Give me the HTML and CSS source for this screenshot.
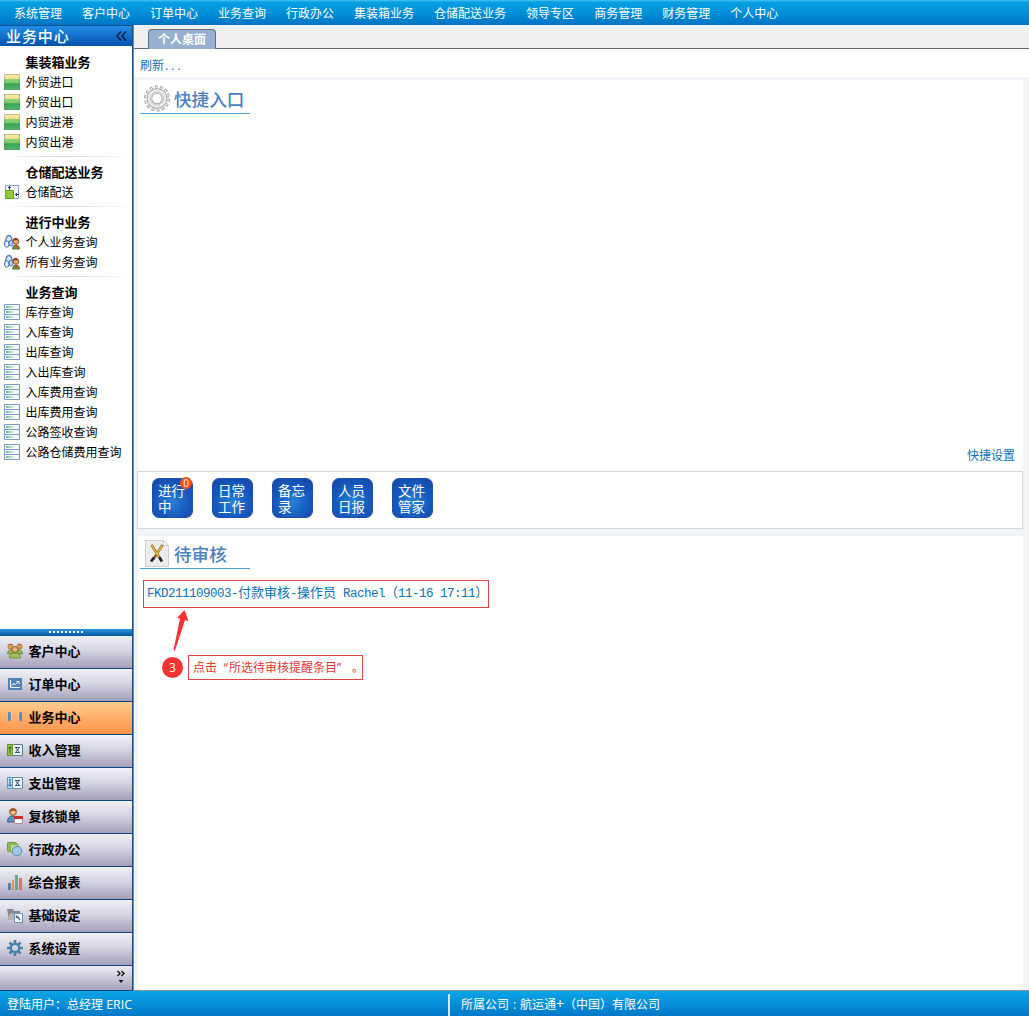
FILE: index.html
```html
<!DOCTYPE html>
<html lang="zh-CN">
<head>
<meta charset="utf-8">
<title>业务中心</title>
<link rel="stylesheet" href="styles.css">
</head>
<body>
<svg class="defs" aria-hidden="true">
  <defs>
    <linearGradient id="gold" x2="0" y2="1"><stop offset="0" stop-color="#fff6b0"/><stop offset="1" stop-color="#e8d680"/></linearGradient>
    <linearGradient id="green" x2="0" y2="1"><stop offset="0" stop-color="#8ad47a"/><stop offset=".38" stop-color="#7fca68"/><stop offset=".42" stop-color="#35a257"/><stop offset="1" stop-color="#4fba70"/></linearGradient>
    <linearGradient id="fade"><stop offset="0" stop-color="#6fbf98"/><stop offset="1" stop-color="#eef8f4"/></linearGradient>
    <symbol id="box" viewBox="0 0 16 16"><path fill="url(#gold)" d="M0 0h16v6H0z"/><path fill="url(#green)" d="M0 5h16v11H0z"/><path fill="none" stroke="#5b9367" stroke-opacity=".6" d="M.5 6v9.500h15V6"/><path fill="none" stroke="#c5b87c" d="M.5 6V.5h15V6"/></symbol>
    <symbol id="rows" viewBox="0 0 16 16"><path fill="#f5faff" stroke="#7f98c4" d="M.5 .5h15v15H.5zM.5 5.500h15M.5 10.500h15"/><path fill="url(#fade)" d="M2 2h9v2H2zM2 7h9v2H2zM2 12h9v2H2z"/></symbol>
    <symbol id="store" viewBox="0 0 16 16"><path fill="#f6f9ff" stroke="#8d9cc4" d="M1.500 1.500h13v13h-13z"/><path fill="#91c93d" stroke="#65a52b" d="M1.500 6.500h8v8h-8z"/><path fill="none" stroke="#26385f" d="M5.500 2v4M4 3.500h3M11 10.500h4M12.500 9v3"/></symbol>
    <symbol id="find" viewBox="0 0 16 16"><path fill="#dceaff" stroke="#587cc0" stroke-width="1.300" d="M1 10Q2 1.500 5 1.500q3 0 3.500 8"/><ellipse cx="2.800" cy="10" rx="2.300" ry="3.200" fill="#eaf4ff" stroke="#456db4"/><ellipse cx="7" cy="9" rx="2" ry="3" fill="#bcd3f5" stroke="#456db4"/><circle cx="12" cy="7.500" r="2.800" fill="#e8af73" stroke="#8d4623"/><path fill="#8a4528" d="M9 7q0-4 4-3l2 3-3-1z"/><path fill="#6b9f43" stroke="#4c732c" d="M8.500 15q0-4 3.500-4t3.500 4z"/><path fill="#cf4f35" d="M11 11h2v3h-2z"/></symbol>
    <symbol id="people" viewBox="0 0 16 16"><g stroke="#97672f" stroke-width=".7"><circle cx="3.500" cy="3.500" r="2.600" fill="#d9a05d"/><circle cx="12.500" cy="3.500" r="2.600" fill="#d9a05d"/></g><path fill="#94b65a" stroke="#58792e" stroke-width=".7" d="M.5 11q0-4 3-4h9q3 0 3 4z"/><circle cx="8" cy="6.500" r="3" fill="#e6b775" stroke="#99582b"/><path fill="#a0c24f" stroke="#587c2b" stroke-width=".7" d="M2.500 15q0-5 5.500-5t5.500 5z"/><path fill="#bc5a3f" d="M2 1h3v1H2zM11 1h3v1h-3z"/></symbol>
    <symbol id="order" viewBox="0 0 16 16"><path fill="#4e86b8" d="M1 2h14v12H1z"/><path fill="none" stroke="#fff" d="M3.500 4v7.500H13M4.500 9.500l2.500-2 1.500 1 3-3M9.500 5.500H12V8"/></symbol>
    <symbol id="bars" viewBox="0 0 16 16"><path fill="#588eb8" d="M1 3h2l1 2v6l-1 1H1zM13 3h2v9h-2l-1-1V5z"/><path fill="#f5c89a" d="M4 4h1v7H4zM11 4h1v7h-1z"/></symbol>
    <symbol id="income" viewBox="0 0 16 16"><path fill="#f5faff" stroke="#537f9f" d="M.5 2.500h15v11H.5z"/><path fill="#9bc848" stroke="#5f952b" d="M.5 2.500h5v11h-5z"/><path fill="none" stroke="#315d2d" d="M3 12V5M1.500 6.500L3 4.500l1.500 2"/><path fill="none" stroke="#31527c" d="M8 5.500h5M8.500 5.500l4 5M12.500 5.500l-4 5M8 10.500h5"/></symbol>
    <symbol id="expense" viewBox="0 0 16 16"><path fill="#f5faff" stroke="#668eb5" d="M.5 2.500h15v11H.5z"/><path fill="#b9dcf1" stroke="#5d9ac2" d="M.5 2.500h5v11h-5z"/><path fill="none" stroke="#285d90" d="M3 4v7M1.500 9.500l1.500 2 1.500-2"/><path fill="none" stroke="#31527c" d="M8 5.500h5M8.500 5.500l4 5M12.500 5.500l-4 5M8 10.500h5"/></symbol>
    <symbol id="lock" viewBox="0 0 16 16"><circle cx="6" cy="4" r="3.400" fill="#f0bc7a" stroke="#985326"/><path fill="#9d5829" d="M2.500 4Q3 0 6 .5q4 0 3.500 3Q6 2 2.500 4z"/><path fill="#5990c6" stroke="#315f91" d="M.5 14q0-6 5-6t5 6z"/><path fill="#fff" stroke="#a68d8e" d="M7.500 9.500h8v6h-8z"/><path fill="#c82d2a" d="M7 8h9v3H7z"/></symbol>
    <symbol id="office" viewBox="0 0 16 16"><rect x=".5" y="1.500" width="9" height="9" rx="1" fill="#90bd58" stroke="#699b38"/><rect x="3.500" y="3.500" width="8" height="8" rx="1" fill="#c9dfa1" stroke="#76a748"/><circle cx="10" cy="10" r="4.700" fill="#9fc9e9" stroke="#5589b3"/></symbol>
    <symbol id="chart" viewBox="0 0 16 16"><path fill="#637fa9" d="M1 9h3v7H1z"/><path fill="#dc9a55" d="M5 6h2v10H5z"/><path fill="#6aa78f" d="M8 1h3v15H8z"/><path fill="#dc755d" d="M12 4h3v12h-3z"/></symbol>
    <symbol id="folder" viewBox="0 0 16 16"><path fill="#888" d="M0 2h6l1 2h6v3H3l-1 6z"/><path fill="#b3b3b6" d="M3 6h11l-3 7H1z"/><path fill="#fafdff" stroke="#6c91ba" d="M7.500 6.500h8v9h-8z"/><path fill="none" stroke="#4c6e98" stroke-width="1.500" d="M10 9l3 4M9.500 8.500v2h2"/></symbol>
    <symbol id="gear" viewBox="0 0 16 16"><g fill="none" stroke="#477fae"><circle cx="8" cy="8" r="4.200" stroke-width="2.400"/><path stroke-width="2.600" d="M8 0v3M8 13v3M0 8h3M13 8h3M2.500 2.500l2 2M11.500 11.500l2 2M13.500 2.500l-2 2M2.500 13.500l2-2"/></g></symbol>
  </defs>
</svg>
<div class="app">
  <nav class="topnav"><span>系统管理</span><span>客户中心</span><span>订单中心</span><span>业务查询</span><span>行政办公</span><span>集装箱业务</span><span>仓储配送业务</span><span>领导专区</span><span>商务管理</span><span>财务管理</span><span>个人中心</span></nav>
  <div class="body">
    <aside class="sidebar">
      <header class="side-head"><span>业务中心</span><svg width="11" height="10" viewBox="0 0 11 10"><path fill="none" stroke="#061a38" stroke-width="1.400" d="M5 .5L1 5l4 4.500M10 .5L6 5l4 4.500"/></svg></header>
      <div class="tree">
        <section class="group"><h3>集装箱业务</h3>
          <a><svg><use href="#box"/></svg><span>外贸进口</span></a><a><svg><use href="#box"/></svg><span>外贸出口</span></a><a><svg><use href="#box"/></svg><span>内贸进港</span></a><a><svg><use href="#box"/></svg><span>内贸出港</span></a></section>
        <section class="group"><h3>仓储配送业务</h3>
          <a><svg><use href="#store"/></svg><span>仓储配送</span></a></section>
        <section class="group"><h3>进行中业务</h3>
          <a><svg><use href="#find"/></svg><span>个人业务查询</span></a><a><svg><use href="#find"/></svg><span>所有业务查询</span></a></section>
        <section class="group"><h3>业务查询</h3>
          <a><svg><use href="#rows"/></svg><span>库存查询</span></a><a><svg><use href="#rows"/></svg><span>入库查询</span></a><a><svg><use href="#rows"/></svg><span>出库查询</span></a><a><svg><use href="#rows"/></svg><span>入出库查询</span></a><a><svg><use href="#rows"/></svg><span>入库费用查询</span></a><a><svg><use href="#rows"/></svg><span>出库费用查询</span></a><a><svg><use href="#rows"/></svg><span>公路签收查询</span></a><a><svg><use href="#rows"/></svg><span>公路仓储费用查询</span></a></section>
      </div>
      <div class="splitter"><i></i></div>
      <div class="stack">
        <a><svg><use href="#people"/></svg>客户中心</a>
        <a><svg><use href="#order"/></svg>订单中心</a>
        <a class="active"><svg><use href="#bars"/></svg>业务中心</a>
        <a><svg><use href="#income"/></svg>收入管理</a>
        <a><svg><use href="#expense"/></svg>支出管理</a>
        <a><svg><use href="#lock"/></svg>复核锁单</a>
        <a><svg><use href="#office"/></svg>行政办公</a>
        <a><svg><use href="#chart"/></svg>综合报表</a>
        <a><svg><use href="#folder"/></svg>基础设定</a>
        <a><svg><use href="#gear"/></svg>系统设置</a>
      </div>
      <div class="side-foot"><svg width="8" height="14" viewBox="0 0 8 14"><path fill="none" stroke="#111" stroke-width="1.400" d="M.5 1L3 3.500.5 6M4.500 1L7 3.500 4.500 6"/><path fill="#111" d="M1.500 10h5L4 13z"/></svg></div>
    </aside>
    <main class="main">
      <div class="tabs"><div class="tab">个人桌面</div></div>
      <div class="refresh">刷新<i>...</i></div>
      <section class="panel quick">
        <h2 class="title">
          <svg width="28" height="28" viewBox="0 0 28 28"><circle cx="14" cy="13.500" r="11.300" fill="none" stroke="#9a9a9a" stroke-width="3.400" stroke-dasharray="2.800 2.271"/><circle cx="14" cy="13.500" r="10.900" fill="none" stroke="#f3f3f3" stroke-width="2.600" stroke-dasharray="1.400 3.492" stroke-dashoffset="-.65"/><circle cx="14" cy="13.500" r="7.500" fill="none" stroke="#999" stroke-width="5.400"/><circle cx="14" cy="13.500" r="7.500" fill="none" stroke="#ececec" stroke-width="4"/><circle cx="14" cy="13.500" r="6.600" fill="none" stroke="#c4c4c4"/></svg>
          <span>快捷入口</span></h2>
        <a class="settings">快捷设置</a>
      </section>
      <section class="tray">
        <a class="tile">进行<br>中<b class="badge">0</b></a>
        <a class="tile">日常<br>工作</a>
        <a class="tile">备忘<br>录</a>
        <a class="tile">人员<br>日报</a>
        <a class="tile">文件<br>管家</a>
      </section>
      <section class="panel review">
        <h2 class="title">
          <svg width="28" height="28" viewBox="0 0 28 28"><path fill="#ececea" stroke="#cfcfcd" d="M2.500 .5h18l5 5v21h-23z"/><path fill="#fff" stroke="#cfcfcd" d="M20.500 .5v5h5z"/><path fill="none" stroke="#7a5525" stroke-width="2.400" d="M8.500 5l9 14M19.500 5l-9 14"/><path fill="none" stroke="#efb63a" stroke-width="1.400" d="M8.800 5.500l7 11M19.200 5.500L13 15"/><path fill="none" stroke="#252525" stroke-width="2.800" d="M16.500 17.500l2.500 4M11 17.500l-3 4"/></svg>
          <span>待审核</span></h2>
        <a class="entry">FKD211109003-<span>付款审核</span>-<span>操作员</span> Rachel<span>（</span>11-16 17:11<span>）</span></a>
        <svg class="arrow" width="20" height="42" viewBox="0 0 20 42"><path fill="#f83232" d="M13.500 0l4 11-3.500-1L4 40.500l-1.500-.5L9 8.500 6 8z"/></svg>
        <div class="callout"><b class="num">3</b><span class="note">点击<i class="open">“</i>所选待审核提醒条目<i>”</i>。</span></div>
      </section>
    </main>
  </div>
  <footer class="status"><span class="user">登陆用户：总经理 <em>ERIC</em></span><span class="company">所属公司<i>:</i>航运通<em>+</em>（中国）有限公司</span></footer>
</div>
</body>
</html>
```
FILE: styles.css
```css
* { box-sizing: border-box; }
body { margin: 0; font: 12px/20px "Open Sans", "Noto Sans CJK SC", sans-serif; color: #000; }
i, em { font-style: normal; }
.defs { position: absolute; width: 0; height: 0; }
.app { height: 1016px; display: flex; flex-direction: column; overflow: hidden; }

.topnav { height: 25px; display: flex; gap: 20px; padding: 4px 14px 0; color: #fff; background: linear-gradient(#49c4f0 0, #08a0e4 2px, #0090d8 50%, #0074c4 100%); }
.topnav span { white-space: nowrap; }

.body { height: 966px; display: flex; }
.sidebar { width: 133px; display: flex; flex-direction: column; border-right: 1px solid #194a84; box-shadow: 1px 0 #6c93b8; position: relative; }
.side-head { height: 21px; display: flex; justify-content: space-between; align-items: center; padding: 0 5px 0 6px; border-top: 1px solid #164d91; background: linear-gradient(#218ee8, #0452ad); color: #fff; font-size: 15px; font-weight: 500; letter-spacing: .9px; }
.tree { flex: 1; padding-top: 6px; }
.group { padding-bottom: 10px; background: linear-gradient(90deg, #fff, #d5d5d5 50%, #fff) 0 calc(100% - 5px) / 100% 1px no-repeat; }
.group:last-child { background: none; }
.group h3 { margin: 0; padding-left: 25.500px; font-size: 13px; line-height: 20px; font-weight: 700; }
.group a { height: 20px; display: flex; align-items: center; gap: 5.500px; padding-left: 4px; white-space: nowrap; }
.group a span { padding-top: 2px; }
.group svg, .stack svg { width: 16px; height: 16px; flex: none; }
.splitter { height: 7px; display: flex; justify-content: center; padding-top: 2px; background: linear-gradient(#2b93e2, #04569f); }
.splitter i { width: 35px; height: 2px; background: repeating-linear-gradient(90deg, #fff 0 2px, transparent 2px 4px); }
.stack a { height: 33px; display: flex; align-items: center; gap: 5.500px; padding: 0 0 2px 7px; border-bottom: 1px solid #0c4781; background: linear-gradient(#f0f0f6 0, #d6d5e2 45%, #a39fba 100%); font-size: 13px; font-weight: 700; }
.stack a.active { background: linear-gradient(#ffce91, #ffaa65 55%, #ff934a); }
.side-foot { height: 25px; padding: 4px 7px 0; text-align: right; line-height: 0; background: linear-gradient(#eeedf4, #a6a2bc); border-bottom: 1px solid #0c4781; }

.main { flex: 1; display: flex; flex-direction: column; background: #f0f4f9; border-bottom: 1px solid #8f9397; }
.tabs { height: 24px; padding: 4px 0 0 15px; background: #f0f0f0; border-bottom: 1px solid #606a72; }
.tab { width: 68px; height: 20px; border: 1px solid #5e6c7b; border-bottom: 0; border-radius: 4px 4px 0 0; background: #98b0d0; color: #fff; font-weight: 700; line-height: 19px; text-align: center; }
.refresh { height: 28px; padding: 7px 7px 0; background: #fff; color: #0873b8; }
.refresh i { padding-left: 1px; letter-spacing: 3px; }
.panel { margin: 0 6px 0 5px; background: #fff; }
.quick { height: 391px; margin-top: 3px; display: flex; flex-direction: column; justify-content: space-between; padding: 4px 8px 5px 2px; }
.title { width: 110px; height: 30px; margin: 0; display: flex; align-items: center; gap: 3px; padding-left: 3px; border-bottom: 1px solid #4aa3d8; color: #4a7fc0; font-size: 17.600px; font-weight: 500; white-space: nowrap; }
.title span { padding-top: 1px; }
.title svg { flex: none; }
.settings { align-self: flex-end; color: #0873b8; }
.tray { height: 58px; margin: 0 6px 0 4px; display: flex; gap: 19px; padding: 6px 14px; border: 1px solid #d2d6db; background: #fff; }
.tile { position: relative; width: 41px; height: 40px; padding: 4px 5px; border-radius: 7px; border: 1px solid #1c4fae; background: radial-gradient(circle at 50% 60%, #2682d4, #1659bd 55%, #1646a5); color: #fff; font-size: 13.500px; line-height: 16px; white-space: nowrap; }
.badge { position: absolute; top: -2px; right: 0; width: 12px; height: 12px; border-radius: 50%; background: #f9501b; font-size: 10px; font-weight: 400; line-height: 12px; text-align: center; }
.review { flex: 1; margin-top: 7px; padding: 3px 2px; }
.entry { display: block; width: 346px; height: 28px; margin: 11px 0 0 3px; padding: 3px 0 0 3px; border: 1px solid #dc4646; color: #0873b8; font: 12.500px/20px "Liberation Mono", "Noto Sans CJK SC", monospace; letter-spacing: -.5px; white-space: nowrap; }
.entry span { font-size: 13px; line-height: 1; letter-spacing: 0; }
.arrow { display: block; margin: 2px 0 0 31px; }
.callout { display: flex; align-items: center; gap: 5px; margin: 3px 0 0 22px; }
.num { width: 21px; height: 21px; border-radius: 50%; background: #f83232; color: #fff; font-size: 12px; font-weight: 400; line-height: 21px; text-align: center; }
.note { width: 175px; height: 25px; padding-left: 4px; border: 1px solid #dc4646; color: #e23838; line-height: 23px; white-space: nowrap; }
.note i { display: inline-block; width: 15px; }
.note .open { width: 12px; padding-right: 1px; text-align: right; }

.status { height: 25px; display: flex; align-items: center; padding: 2px 0 0 7px; background: linear-gradient(#0ba5e7, #0078c8); color: #fff; }
.user { width: 441px; }
.user em { font-size: 12.500px; }
.company { height: 22px; padding-left: 11px; border-left: 2px solid #d7e6ef; line-height: 22px; }
.company i { display: inline-block; width: 11px; text-align: center; }
.company em { font-size: 14px; line-height: 1; }
```
